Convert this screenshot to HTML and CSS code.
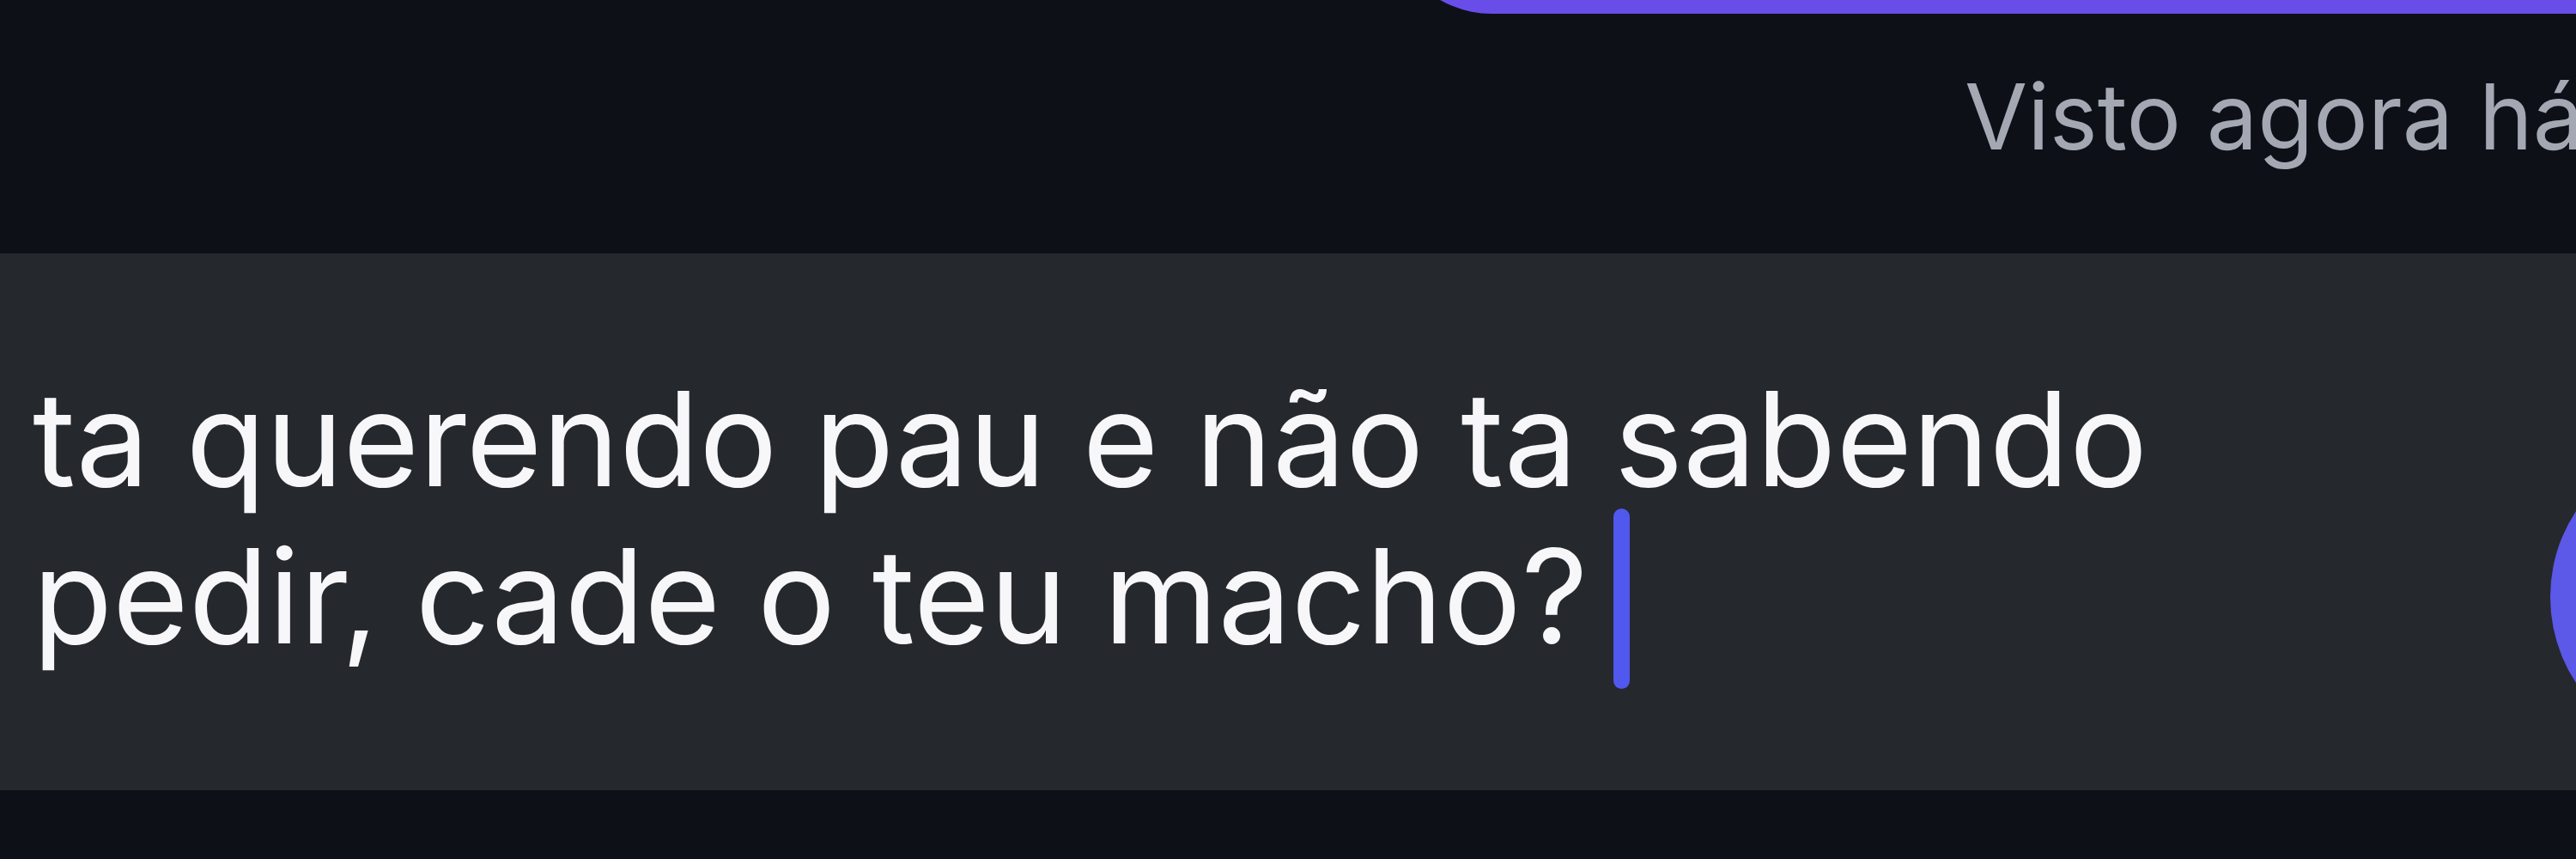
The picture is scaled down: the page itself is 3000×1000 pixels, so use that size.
FILE: index.html
```html
<!DOCTYPE html>
<html lang="pt">
<head>
  <meta charset="UTF-8" />
  <meta name="viewport" content="width=device-width, initial-scale=1.0"/>
  <title>Conversa</title>
  <link rel="stylesheet" href="styles.css">
</head>
<body>
  <div class="conversa">
    <div class="linha minha">
      <div class="balao"></div>
    </div>
    <div class="visto">Visto agora há pouco</div>
  </div>

  <div class="compositor">
    <div class="rascunho">ta querendo pau e não ta sabendo pedir, cade o teu macho?<span class="cursor"></span></div>
    <button class="enviar" aria-label="Enviar"></button>
  </div>
</body>
</html>
```

FILE: styles.css
```css
* { margin: 0; padding: 0; box-sizing: border-box; }

html, body {
  height: 100%;
  font-family: 'Inter', 'Noto Sans', sans-serif;
  background: #0d1017;
  color: #fff;
  overflow: hidden;
}

.conversa {
  display: flex;
  flex-direction: column;
}

.linha {
  display: flex;
  justify-content: flex-end;
  margin-right: -200px;
}

.balao {
  width: 1583px;
  height: 300px;
  margin-top: -284px;
  background: #694de8;
  border-radius: 120px;
}

.visto {
  margin-top: 56px;
  padding-left: 2288px;
  font-size: 106px;
  line-height: 128px;
  color: #a3a8b3;
  white-space: nowrap;
  overflow: hidden;
}

.compositor {
  display: flex;
  margin-top: 95px;
  height: 625px;
  background: #25282d;
}

.rascunho {
  flex: 1;
  margin-right: 300px;
  padding: 125px 0 0 38px;
  font-size: 152px;
  line-height: 183px;
  color: #f7f7f9;
}

.cursor {
  display: inline-block;
  width: 19px;
  height: 210px;
  margin: -60px 0 -20px 30px;
  vertical-align: -33px;
  border-radius: 10px;
  background: #5058ee;
}

.enviar {
  align-self: flex-end;
  flex: none;
  width: 364px;
  height: 364px;
  margin-bottom: 43px;
  margin-right: -334px;
  border: none;
  border-radius: 50%;
  background: #5c58e8;
}
```
